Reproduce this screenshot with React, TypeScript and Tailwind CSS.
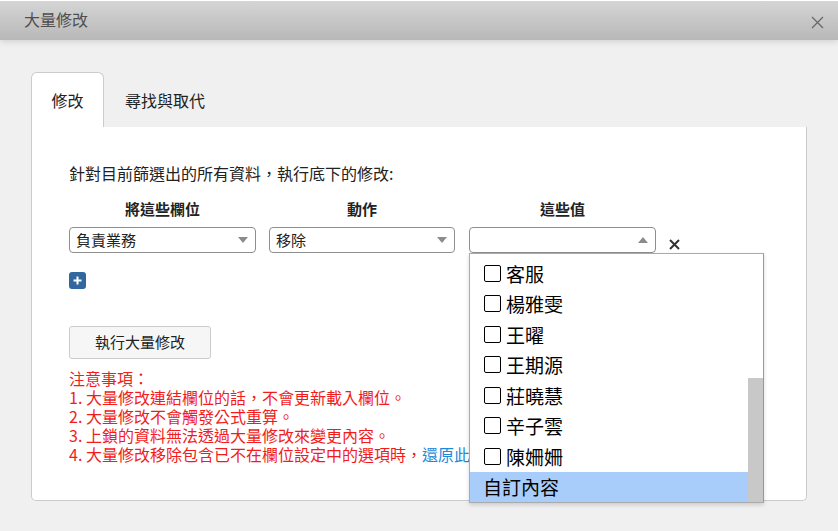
import React from "react";

const items = ["客服", "楊雅雯", "王曜", "王期源", "莊曉慧", "辛子雲", "陳姍姍"];

function Arrow({ up = false }: { up?: boolean }) {
  return (
    <svg width="10" height="6" viewBox="0 0 10 6" className="shrink-0">
      {up ? <polygon points="0,6 10,6 5,0" fill="#8c8c8c" /> : <polygon points="0,0 10,0 5,6" fill="#8c8c8c" />}
    </svg>
  );
}

export default function App() {
  return (
    <div className="relative w-[838px] h-[531px] bg-[#f0f0f0] overflow-hidden font-['Noto_Sans_CJK_TC','Noto_Sans',sans-serif] text-[#222]">
      {/* header */}
      <div className="h-[40px] border-t border-white bg-gradient-to-b from-[#d5d5d5] to-[#b8b8b8] flex items-center justify-between pl-[24px] pr-[14px] shadow-[0_2px_6px_rgba(0,0,0,0.12)]">
        <span className="text-[16px] text-[#4f4f4f] leading-none mt-[-4px]">大量修改</span>
        <svg width="13" height="13" viewBox="0 0 13 13" className="mt-[4px]">
          <path d="M1 1 L12 12 M12 1 L1 12" stroke="#666" strokeWidth="1.2" />
        </svg>
      </div>

      <div className="pl-[31px] pr-[31px] pt-[32px]">
        {/* tabs */}
        <div className="flex h-[55px]">
          <div className="w-[73px] bg-white border-t border-l border-r border-[#ccc] rounded-t-[6px] flex items-center justify-center text-[16px] text-[#222]">
            修改
          </div>
          <div className="pl-[21px] flex items-center text-[16px] text-[#222]">尋找與取代</div>
        </div>

        {/* panel */}
        <div className="h-[374px] bg-white border-l border-r border-b border-[#ccc] rounded-b-[5px] pl-[37px] pt-[36px]">
          <div className="text-[16px] leading-[20px] text-[#222]">針對目前篩選出的所有資料，執行底下的修改:</div>

          <div className="flex mt-[16px] text-[15px] leading-[20px] font-bold text-[#222]">
            <div className="w-[187px] text-center">將這些欄位</div>
            <div className="w-[186px] ml-[13px] text-center">動作</div>
            <div className="w-[187px] ml-[14px] text-center">這些值</div>
          </div>

          <div className="flex mt-[8px] items-start">
            <div className="w-[187px] h-[26px] border border-[#8f8f8f] rounded-[4px] flex items-center justify-between pl-[6px] pr-[7px] text-[15px]">
              <span>負責業務</span>
              <Arrow />
            </div>
            <div className="w-[186px] h-[26px] ml-[13px] border border-[#8f8f8f] rounded-[4px] flex items-center justify-between pl-[6px] pr-[7px] text-[15px]">
              <span>移除</span>
              <Arrow />
            </div>
            <div className="relative w-[187px] ml-[14px]">
              <div className="h-[26px] border border-[#8f8f8f] rounded-[4px] flex items-center justify-end pr-[7px]">
                <Arrow up />
              </div>
              <div className="absolute left-0 top-[26px] w-[295px] h-[250px] bg-white border border-[#aaa] border-r-[#999] shadow-[0_2px_4px_rgba(0,0,0,0.15)] z-10 flex">
                <div className="flex-1 pt-[4px]">
                  {items.map((it) => (
                    <div key={it} className="h-[30.5px] flex items-center pl-[14px] text-[19px] leading-none text-black">
                      <span className="w-[17px] h-[17px] border-[1.5px] border-black rounded-[2px] mr-[5px] shrink-0" />
                      <span>{it}</span>
                    </div>
                  ))}
                  <div className="h-[30.5px] flex items-center pl-[13px] text-[19px] leading-none text-black bg-[#a9cdfa]">
                    自訂內容
                  </div>
                </div>
                <div className="w-[15px] flex flex-col">
                  <div className="h-[124px]" />
                  <div className="flex-1 bg-[#c8c8c8]" />
                </div>
              </div>
            </div>
            <svg width="11" height="11" viewBox="0 0 11 11" className="ml-[13px] mt-[12px]">
              <path d="M1 1 L10 10 M10 1 L1 10" stroke="#333" strokeWidth="2" />
            </svg>
          </div>

          <div className="mt-[19px] w-[17px] h-[17px] bg-[#30679f] rounded-[3px] flex items-center justify-center">
            <svg width="9" height="9" viewBox="0 0 9 9">
              <path d="M4.5 0.5 V8.5 M0.5 4.5 H8.5" stroke="white" strokeWidth="2" />
            </svg>
          </div>

          <button className="mt-[37px] w-[142px] h-[33px] bg-[#f6f6f6] border border-[#ccc] rounded-[3px] text-[15px] text-[#222] flex items-center justify-center">
            執行大量修改
          </button>

          <div className="mt-[10px] text-[16px] leading-[19px] text-[#f21c1c] whitespace-nowrap">
            <div className="h-[19px]">注意事項：</div>
            <div className="h-[19px]">1. 大量修改連結欄位的話，不會更新載入欄位。</div>
            <div className="h-[19px]">2. 大量修改不會觸發公式重算。</div>
            <div className="h-[19px]">3. 上鎖的資料無法透過大量修改來變更內容。</div>
            <div className="h-[19px]">
              4. 大量修改移除包含已不在欄位設定中的選項時，<span className="text-[#1f8ad8]">還原此選項</span>
            </div>
          </div>
        </div>
      </div>
    </div>
  );
}
